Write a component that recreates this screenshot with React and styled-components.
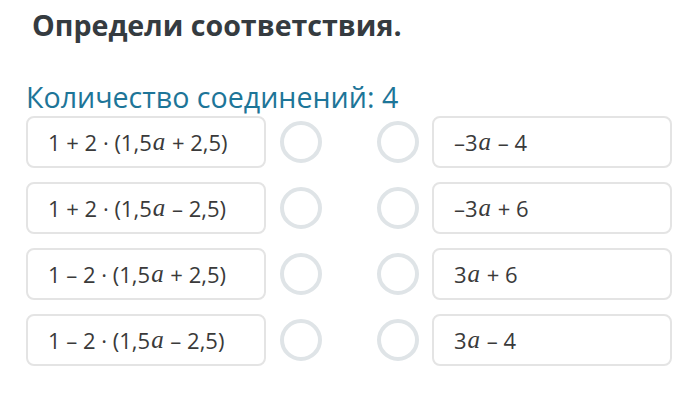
import styled, { createGlobalStyle } from "styled-components";

const GlobalStyle = createGlobalStyle`
  body {
    margin: 0;
    background: #ffffff;
    font-family: "Open Sans", "Noto Sans", sans-serif;
  }
`;

const left = [
  ["1 + 2 · (1,5", "a", " + 2,5)"],
  ["1 + 2 · (1,5", "a", " – 2,5)"],
  ["1 – 2 · (1,5", "a", " + 2,5)"],
  ["1 – 2 · (1,5", "a", " – 2,5)"],
];

const right = [
  ["–3", "a", " – 4"],
  ["–3", "a", " + 6"],
  ["3", "a", " + 6"],
  ["3", "a", " – 4"],
];

function Expr({ parts }) {
  return (
    <>
      {parts[0]}
      <Var>{parts[1]}</Var>
      {parts[2]}
    </>
  );
}

function App() {
  return (
    <Page>
      <GlobalStyle />
      <Title>Определи соответствия.</Title>
      <Counter>Количество соединений: 4</Counter>
      <Rows>
        {left.map((l, i) => (
          <Row key={i}>
            <Card>
              <Expr parts={l} />
            </Card>
            <Dot />
            <Dot $far />
            <Card $right>
              <Expr parts={right[i]} />
            </Card>
          </Row>
        ))}
      </Rows>
    </Page>
  );
}

const Page = styled.div`
  width: 697px;
  height: 404px;
  padding: 6px 0 0 26px;
  box-sizing: border-box;
`;

const Title = styled.h1`
  margin: 0 0 0 6px;
  font-size: 28.6px;
  line-height: 38px;
  font-weight: 700;
  color: #353b40;
`;

const Counter = styled.div`
  margin-top: 34px;
  font-size: 28.6px;
  line-height: 38px;
  color: #1d7598;
`;

const Rows = styled.div`
  display: flex;
  flex-direction: column;
  gap: 14px;
  margin-top: 0;
`;

const Row = styled.div`
  display: flex;
  align-items: center;
`;

const Card = styled.div`
  box-sizing: border-box;
  width: 240px;
  height: 52px;
  margin-left: ${(p) => (p.$right ? "13px" : "0")};
  padding-left: 20px;
  display: flex;
  align-items: center;
  border: 2px solid #e4e4e4;
  border-radius: 8px;
  font-size: 22px;
  color: #3a3a3a;
  white-space: pre;
`;

const Dot = styled.div`
  box-sizing: border-box;
  width: 42px;
  height: 42px;
  margin-left: ${(p) => (p.$far ? "55px" : "14px")};
  border: 4px solid #dfe4e7;
  border-radius: 50%;
`;

const Var = styled.span`
  font-family: "Liberation Serif", serif;
  font-style: italic;
  font-size: 25px;
  padding: 0 1px;
`;

export default App;
